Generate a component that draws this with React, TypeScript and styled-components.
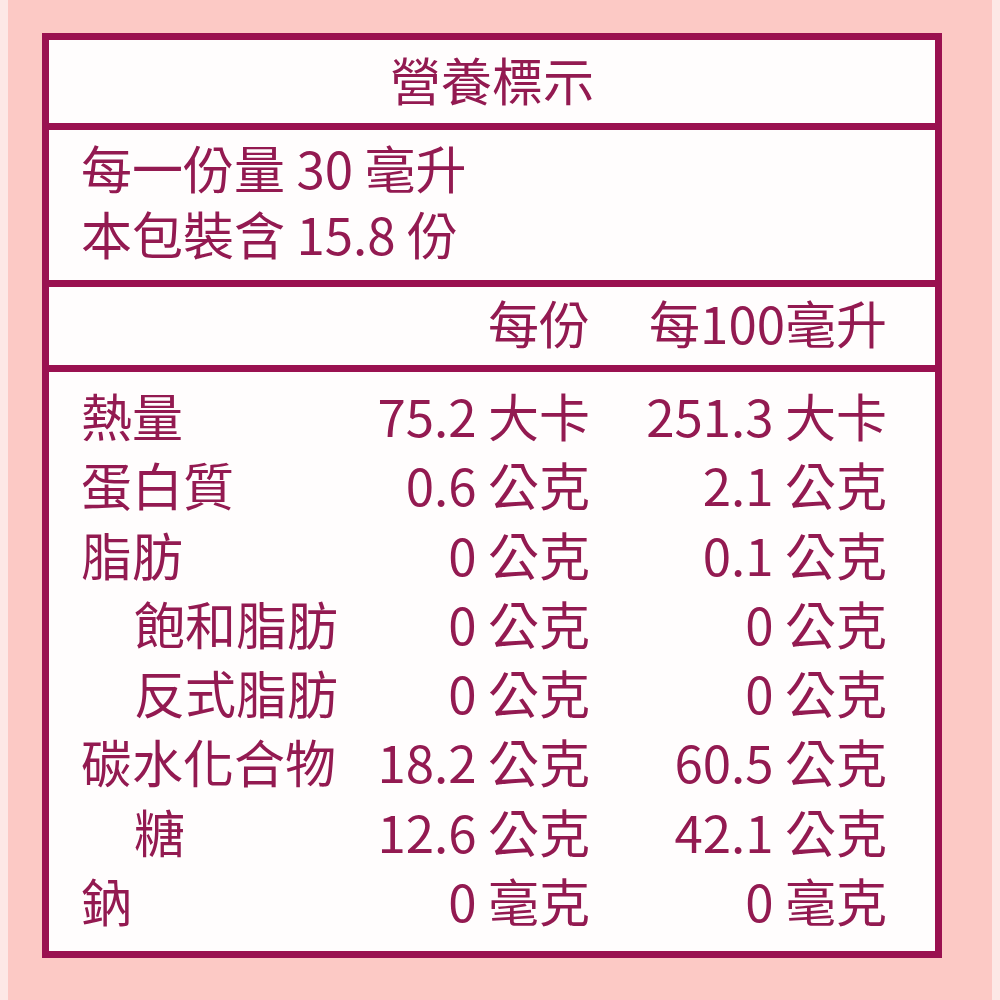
import React from "react";
import styled, { createGlobalStyle } from "styled-components";

const ink = "#9a1150";
const text = "#931a51";

const GlobalStyle = createGlobalStyle`
  html, body {
    margin: 0;
    padding: 0;
    background: #fde8e6;
  }
  body {
    font-family: "Noto Sans CJK TC", "Noto Sans", sans-serif;
  }
`;

const Page = styled.div`
  width: 984px;
  height: 1000px;
  margin: 0 auto;
  background: #fcc9c5;
  box-sizing: border-box;
  padding: 33px 0 0 34px;
`;

const Label = styled.div`
  width: 900px;
  height: 925px;
  box-sizing: border-box;
  border: 7px solid ${ink};
  background: #fffdfd;
  display: flex;
  flex-direction: column;
  color: ${text};
  font-size: 51px;
`;

const Section = styled.div<{ $divider?: boolean }>`
  border-top: ${(p) => (p.$divider ? `7px solid ${ink}` : "none")};
`;

const Title = styled(Section)`
  height: 83px;
  box-sizing: border-box;
  padding-bottom: 4px;
  line-height: 79px;
  text-align: center;
`;

const Serving = styled(Section)`
  height: 157px;
  box-sizing: border-box;
  padding: 4px 32px 0;
  line-height: 66px;
`;

const Grid = styled.div`
  display: grid;
  grid-template-columns: 1fr 240px 297px;
  padding: 0 48px 0 32px;
`;

const Header = styled(Section)`
  height: 85px;
  box-sizing: border-box;
  padding-bottom: 6px;
  line-height: 71px;
`;

const Body = styled(Section)`
  flex: 1;
  padding-top: 9px;
  line-height: 69.3px;
`;

const Name = styled.div<{ $indent?: boolean }>`
  padding-left: ${(p) => (p.$indent ? "53px" : "0")};
  white-space: nowrap;
`;

const Value = styled.div`
  text-align: right;
  white-space: nowrap;
`;

const rows: { name: string; indent?: boolean; per: string; per100: string }[] = [
  { name: "熱量", per: "75.2 大卡", per100: "251.3 大卡" },
  { name: "蛋白質", per: "0.6 公克", per100: "2.1 公克" },
  { name: "脂肪", per: "0 公克", per100: "0.1 公克" },
  { name: "飽和脂肪", indent: true, per: "0 公克", per100: "0 公克" },
  { name: "反式脂肪", indent: true, per: "0 公克", per100: "0 公克" },
  { name: "碳水化合物", per: "18.2 公克", per100: "60.5 公克" },
  { name: "糖", indent: true, per: "12.6 公克", per100: "42.1 公克" },
  { name: "鈉", per: "0 毫克", per100: "0 毫克" },
];

export default function App() {
  return (
    <>
      <GlobalStyle />
      <Page>
        <Label>
          <Title>營養標示</Title>
          <Serving $divider>
            <div>每一份量 30 毫升</div>
            <div>本包裝含 15.8 份</div>
          </Serving>
          <Header $divider>
            <Grid>
              <Name />
              <Value>每份</Value>
              <Value>每100毫升</Value>
            </Grid>
          </Header>
          <Body $divider>
            <Grid>
              {rows.map((r) => (
                <React.Fragment key={r.name}>
                  <Name $indent={r.indent}>{r.name}</Name>
                  <Value>{r.per}</Value>
                  <Value>{r.per100}</Value>
                </React.Fragment>
              ))}
            </Grid>
          </Body>
        </Label>
      </Page>
    </>
  );
}
